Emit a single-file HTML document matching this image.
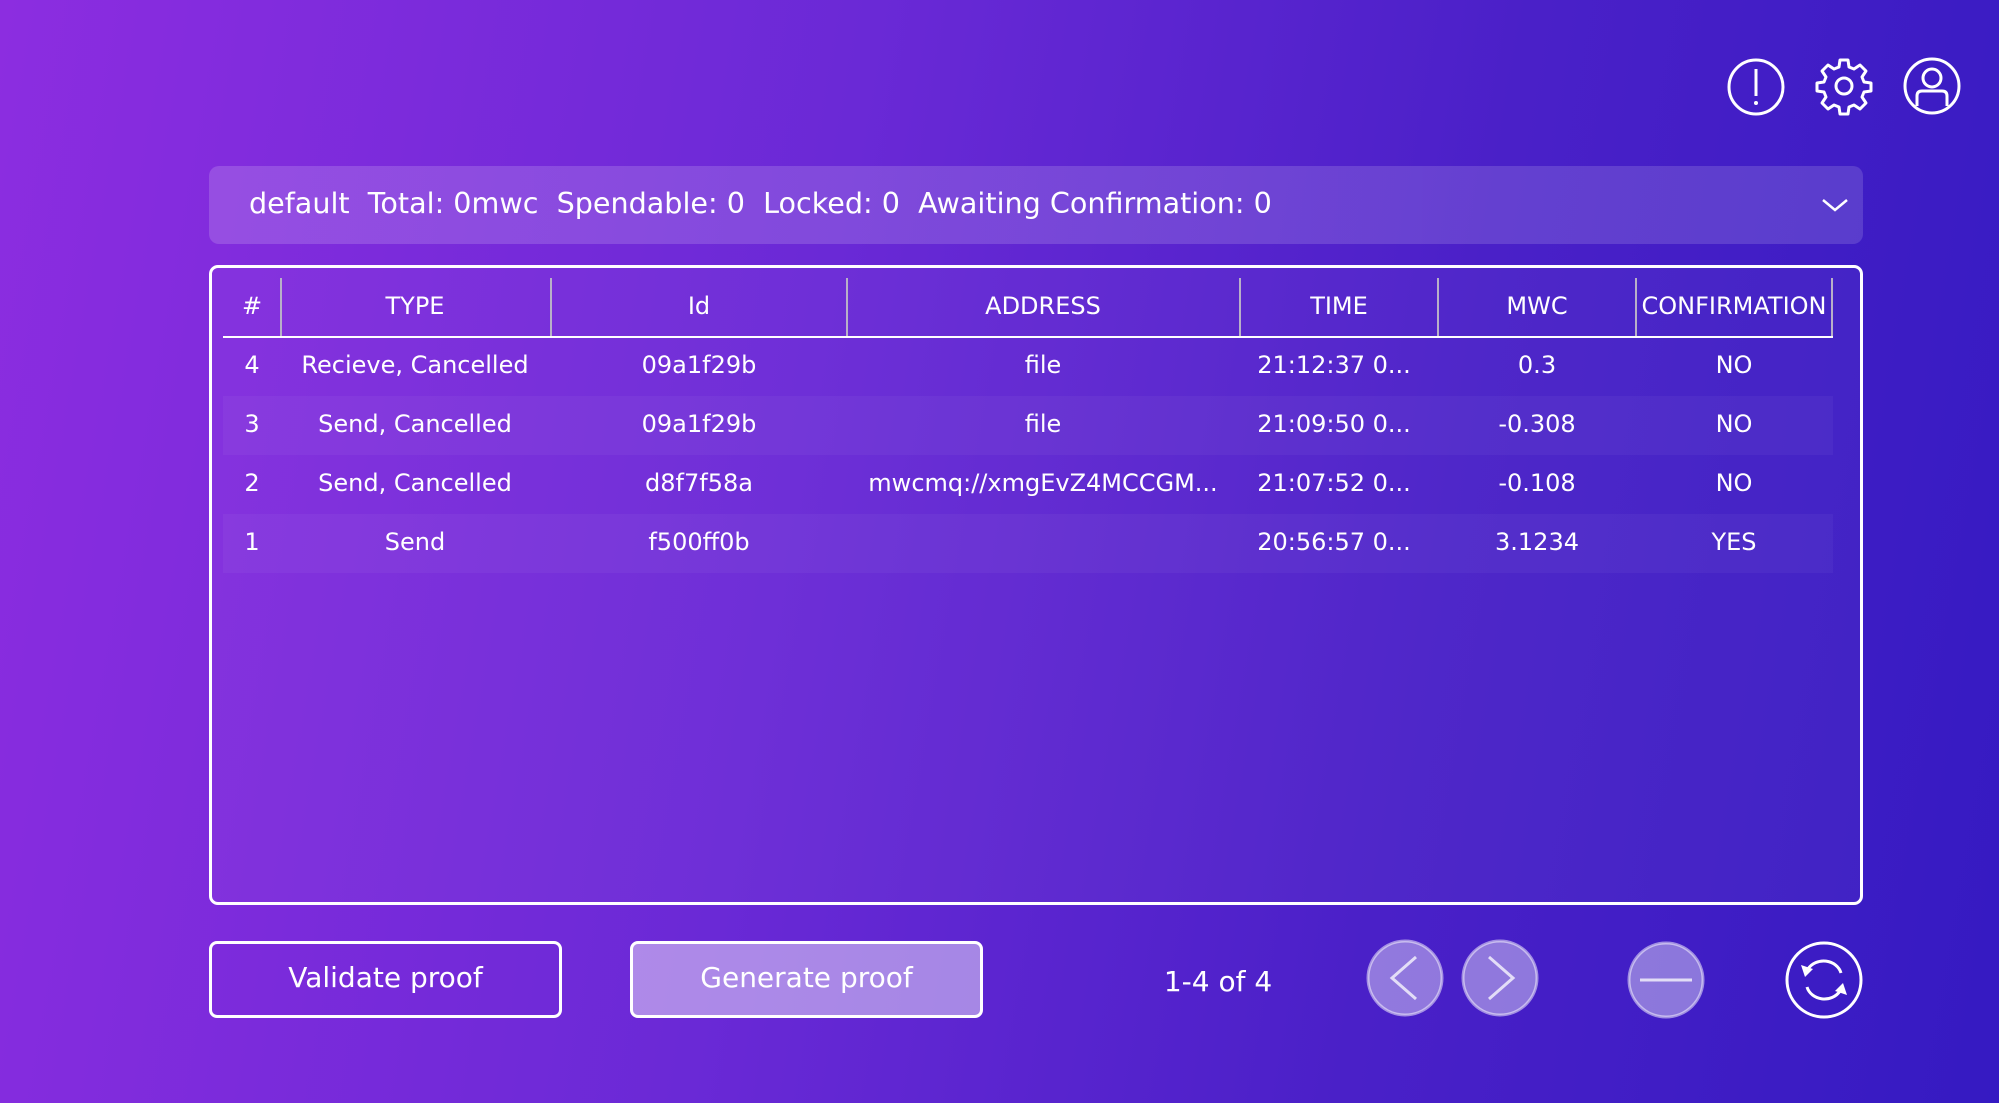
<!DOCTYPE html>
<html><head><meta charset="utf-8"><style>
*{margin:0;padding:0;box-sizing:border-box}
body{width:1999px;height:1103px;overflow:hidden;background:linear-gradient(100deg,#8c2de0 0%,#6a29d6 40%,#4a20c8 70%,#351ac2 100%);font-family:"DejaVu Sans","Liberation Sans",sans-serif;color:#fff;position:relative}
.abs{position:absolute}
.dd{left:209px;top:166px;width:1654px;height:78px;border-radius:10px;background:linear-gradient(90deg,rgba(255,255,255,0.16),rgba(255,255,255,0.14));}
.dd span{position:absolute;left:40px;top:20px;font-size:28.6px;white-space:pre}
.tbl{left:209px;top:265px;width:1654px;height:640px;border:3px solid #fff;border-radius:9px;background:rgba(255,255,255,0.03)}
.hdr{top:336px;left:223px;width:1610px;height:2px;background:#fff}
.sep{top:278px;width:2px;height:58px;background:#b8b0c8}
.cell{position:absolute;font-size:24px;text-align:center;transform:translateX(-50%);white-space:nowrap}
.band{left:223px;width:1610px;height:59px;background:rgba(255,255,255,0.04)}
.btn{top:941px;height:77px;width:353px;border:3px solid #fff;border-radius:8px;font-size:28px;text-align:center;line-height:68px}
.circ{width:78px;height:78px;border-radius:50%}
</style></head><body>
<svg class="abs" style="left:1726px;top:57px" width="60" height="60" viewBox="0 0 60 60"><circle cx="30" cy="30" r="27" fill="none" stroke="#fff" stroke-width="3"/><line x1="30" y1="12" x2="30" y2="39" stroke="#fff" stroke-width="3"/><circle cx="30" cy="46" r="2" fill="#fff"/></svg>
<svg class="abs" style="left:1814px;top:56px" width="60" height="60" viewBox="0 0 60 60"><path d="M26 4h8l1 7 5 2 6-4 6 6-4 6 2 5 7 1v8l-7 1-2 5 4 6-6 6-6-4-5 2-1 7h-8l-1-7-5-2-6 4-6-6 4-6-2-5-7-1v-8l7-1 2-5-4-6 6-6 6 4 5-2z" fill="none" stroke="#fff" stroke-width="3" stroke-linejoin="round"/><circle cx="30" cy="30" r="8" fill="none" stroke="#fff" stroke-width="3"/></svg>
<svg class="abs" style="left:1902px;top:56px" width="60" height="60" viewBox="0 0 60 60"><circle cx="30" cy="30" r="27" fill="none" stroke="#fff" stroke-width="3"/><circle cx="30" cy="22" r="9" fill="none" stroke="#fff" stroke-width="3"/><path d="M15 50v-10q0-5 5-5h20q5 0 5 5v10" fill="none" stroke="#fff" stroke-width="3"/></svg>
<div class="abs dd"><span>default  Total: 0mwc  Spendable: 0  Locked: 0  Awaiting Confirmation: 0</span>
<svg class="abs" style="left:1612px;top:31px" width="28" height="16" viewBox="0 0 28 16"><path d="M2 3l12 10 12-10" fill="none" stroke="#fff" stroke-width="2.5"/></svg></div>
<div class="abs tbl"></div>
<div class="abs band" style="top:396px"></div>
<div class="abs band" style="top:514px"></div>
<div class="abs hdr"></div>
<div class="abs sep" style="left:280px"></div><div class="abs sep" style="left:550px"></div><div class="abs sep" style="left:846px"></div><div class="abs sep" style="left:1239px"></div><div class="abs sep" style="left:1437px"></div><div class="abs sep" style="left:1635px"></div><div class="abs sep" style="left:1831px"></div>
<div class="cell" style="left:252px;top:292px">#</div>
<div class="cell" style="left:415px;top:292px">TYPE</div>
<div class="cell" style="left:699px;top:292px">Id</div>
<div class="cell" style="left:1043px;top:292px">ADDRESS</div>
<div class="cell" style="left:1339px;top:292px">TIME</div>
<div class="cell" style="left:1537px;top:292px">MWC</div>
<div class="cell" style="left:1734px;top:292px">CONFIRMATION</div>

<div class="cell" style="left:252px;top:351px">4</div><div class="cell" style="left:415px;top:351px">Recieve, Cancelled</div><div class="cell" style="left:699px;top:351px">09a1f29b</div><div class="cell" style="left:1043px;top:351px">file</div><div class="cell" style="left:1334px;top:351px">21:12:37 0...</div><div class="cell" style="left:1537px;top:351px">0.3</div><div class="cell" style="left:1734px;top:351px">NO</div>
<div class="cell" style="left:252px;top:410px">3</div><div class="cell" style="left:415px;top:410px">Send, Cancelled</div><div class="cell" style="left:699px;top:410px">09a1f29b</div><div class="cell" style="left:1043px;top:410px">file</div><div class="cell" style="left:1334px;top:410px">21:09:50 0...</div><div class="cell" style="left:1537px;top:410px">-0.308</div><div class="cell" style="left:1734px;top:410px">NO</div>
<div class="cell" style="left:252px;top:469px">2</div><div class="cell" style="left:415px;top:469px">Send, Cancelled</div><div class="cell" style="left:699px;top:469px">d8f7f58a</div><div class="cell" style="left:1043px;top:469px">mwcmq://xmgEvZ4MCCGM...</div><div class="cell" style="left:1334px;top:469px">21:07:52 0...</div><div class="cell" style="left:1537px;top:469px">-0.108</div><div class="cell" style="left:1734px;top:469px">NO</div>
<div class="cell" style="left:252px;top:528px">1</div><div class="cell" style="left:415px;top:528px">Send</div><div class="cell" style="left:699px;top:528px">f500ff0b</div><div class="cell" style="left:1334px;top:528px">20:56:57 0...</div><div class="cell" style="left:1537px;top:528px">3.1234</div><div class="cell" style="left:1734px;top:528px">YES</div>

<div class="abs btn" style="left:209px">Validate proof</div>
<div class="abs btn" style="left:630px;background:rgba(255,255,255,0.45)">Generate proof</div>
<div class="cell" style="left:1218px;top:965px;font-size:28px">1-4 of 4</div>
<svg class="abs circ" style="left:1366px;top:939px" viewBox="0 0 78 78"><circle cx="39" cy="39" r="37" fill="rgba(255,255,255,0.4)" stroke="rgba(255,255,255,0.5)" stroke-width="3"/><path d="M50 18L26 39l24 21" fill="none" stroke="rgba(255,255,255,0.75)" stroke-width="3"/></svg>
<svg class="abs circ" style="left:1461px;top:939px" viewBox="0 0 78 78"><circle cx="39" cy="39" r="37" fill="rgba(255,255,255,0.4)" stroke="rgba(255,255,255,0.5)" stroke-width="3"/><path d="M28 18l24 21-24 21" fill="none" stroke="rgba(255,255,255,0.75)" stroke-width="3"/></svg>
<svg class="abs circ" style="left:1627px;top:941px" viewBox="0 0 78 78"><circle cx="39" cy="39" r="37" fill="rgba(255,255,255,0.4)" stroke="rgba(255,255,255,0.5)" stroke-width="3"/><line x1="13" y1="39" x2="65" y2="39" stroke="rgba(255,255,255,0.75)" stroke-width="3"/></svg>
<svg class="abs circ" style="left:1785px;top:941px" viewBox="0 0 78 78"><circle cx="39" cy="39" r="37" fill="none" stroke="#fff" stroke-width="3"/><path d="M56 32a18 16 0 0 0-33-4" fill="none" stroke="#fff" stroke-width="3"/><path d="M16 24l4 12 8-8z" fill="#fff"/><path d="M22 46a18 16 0 0 0 33 4" fill="none" stroke="#fff" stroke-width="3"/><path d="M62 54l-4-12-8 8z" fill="#fff"/></svg>
</body></html>
